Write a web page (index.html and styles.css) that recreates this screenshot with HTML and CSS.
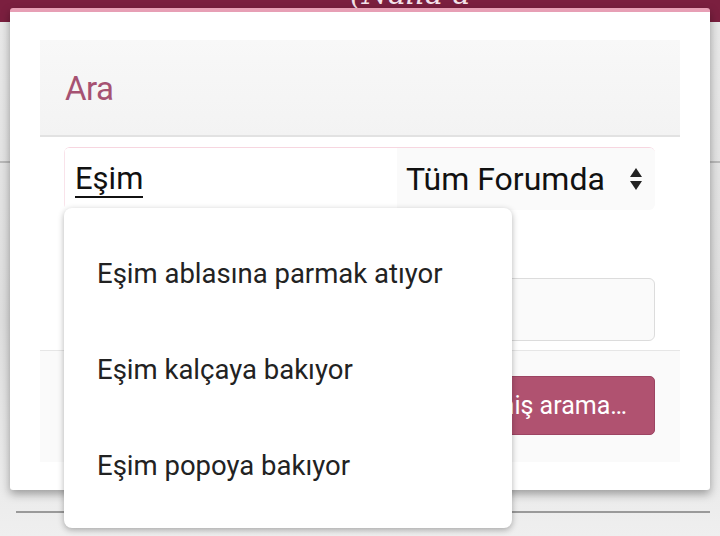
FILE: index.html
```html
<!DOCTYPE html>
<html lang="tr">
<head>
  <meta charset="UTF-8" />
  <meta name="viewport" content="width=device-width, initial-scale=1.0"/>
  <title>Ara</title>
  <link rel="stylesheet" href="styles.css">
</head>
<body>
  <!-- page behind the overlay -->
  <div class="page">
    <div class="topbar"><span class="logo-text">(Nalla a</span></div>
    <div class="page-line page-line-top"></div>
    <div class="page-line page-line-bottom"></div>
  </div>

  <!-- search modal -->
  <div class="modal">
    <div class="modal-head">
      <h2>Ara</h2>
    </div>

    <div class="modal-body">
      <div class="search-row">
        <div class="search-input"><span class="typed">Eşim</span></div>
        <div class="search-select">
          <span>Tüm Forumda</span>
          <svg class="sort-arrows" width="14" height="24" viewBox="0 0 14 24">
            <path d="M7 1 L13 10 L1 10 Z" fill="#222"/>
            <path d="M7 23 L13 14 L1 14 Z" fill="#222"/>
          </svg>
        </div>
      </div>
      <div class="second-input"></div>
    </div>

    <div class="modal-foot">
      <button class="adv-btn">Gelişmiş arama…</button>
    </div>
  </div>

  <!-- autocomplete suggestions -->
  <ul class="suggestions">
    <li>Eşim ablasına parmak atıyor</li>
    <li>Eşim kalçaya bakıyor</li>
    <li>Eşim popoya bakıyor</li>
  </ul>
</body>
</html>
```

FILE: styles.css
```css
/* reset */
* {
  margin: 0;
  padding: 0;
  box-sizing: border-box;
}
html, body {
  width: 720px;
  height: 536px;
  overflow: hidden;
}
body {
  font-family: Roboto, "Noto Sans", sans-serif;
  background: #e4e4e4;
  color: #222;
  position: relative;
}

/* page behind */
.page {
  height: 100%;
  background: linear-gradient(180deg, #e9e9e9, #dedede 60%, #efefef);
}
.topbar {
  height: 22px;
  background: #7b1f3f;
  padding-left: 350px;
  overflow: hidden;
}
.logo-text {
  font-family: "DejaVu Serif", serif;
  font-style: italic;
  font-size: 30px;
  line-height: 16px;
  color: #f4e3ea;
  display: block;
  margin-top: -14px;
}
.page-line {
  position: absolute;
  height: 2px;
  background: #b9b9b9;
}
.page-line-top {
  top: 161px;
  left: 0;
  right: 0;
}
.page-line-bottom {
  top: 511px;
  left: 16px;
  right: 10px;
  background: #9a9a9a;
}

/* modal */
.modal {
  position: absolute;
  left: 10px;
  top: 8px;
  width: 700px;
  height: 482px;
  background: #fff;
  border-top: 4px solid #e79fb5;
  border-radius: 3px;
  box-shadow: 0 4px 10px rgba(0,0,0,0.35);
  padding: 28px 30px 0;
}
.modal-head {
  height: 97px;
  background: linear-gradient(180deg, #f8f8f8, #f3f3f3);
  border-bottom: 2px solid #e2e2e2;
  padding: 29px 25px 0;
}
.modal-head h2 {
  font-weight: 400;
  font-size: 33px;
  color: #a65272;
  letter-spacing: -0.5px;
}
.modal-body {
  padding: 10px 25px 9px 24px;
}
.search-row {
  display: flex;
  height: 63px;
  border-top: 1px solid #f7d6e0;
  border-radius: 6px;
  overflow: hidden;
}
.search-input {
  width: 333px;
  background: #fff;
  border-left: 1px solid #f9e3ea;
  padding: 14px 0 0 10px;
}
.typed {
  font-size: 31px;
  color: #111;
  border-bottom: 2px solid #111;
  line-height: 34px;
  display: inline-block;
}
.search-select {
  flex: 1;
  display: flex;
  align-items: center;
  justify-content: space-between;
  background: #fafafa;
  padding: 0 12px 0 9px;
  font-size: 32px;
  color: #111;
}
.sort-arrows {
  display: block;
}
.second-input {
  margin-top: 68px;
  height: 63px;
  border: 1px solid #dcdcdc;
  border-radius: 6px;
  background: #fafafa;
}

.modal-foot {
  height: 112px;
  background: #fafafa;
  border-top: 1px solid #e6e6e6;
  display: flex;
  justify-content: flex-end;
  align-items: flex-start;
  padding: 25px 25px 0;
}
.adv-btn {
  height: 59px;
  padding: 0 27px 0 24px;
  background: #b05270;
  color: #fff;
  border: 1px solid #9c4462;
  border-radius: 5px;
  font-family: Roboto, "Noto Sans", sans-serif;
  font-size: 25px;
}

/* suggestions dropdown */
.suggestions {
  position: absolute;
  left: 64px;
  top: 208px;
  width: 448px;
  height: 320px;
  list-style: none;
  background: #fff;
  border-radius: 8px;
  box-shadow: 0 2px 6px rgba(0,0,0,0.3);
  padding-top: 18px;
}
.suggestions li {
  height: 96px;
  line-height: 96px;
  padding-left: 33px;
  font-size: 27.5px;
  color: #222;
}
```
